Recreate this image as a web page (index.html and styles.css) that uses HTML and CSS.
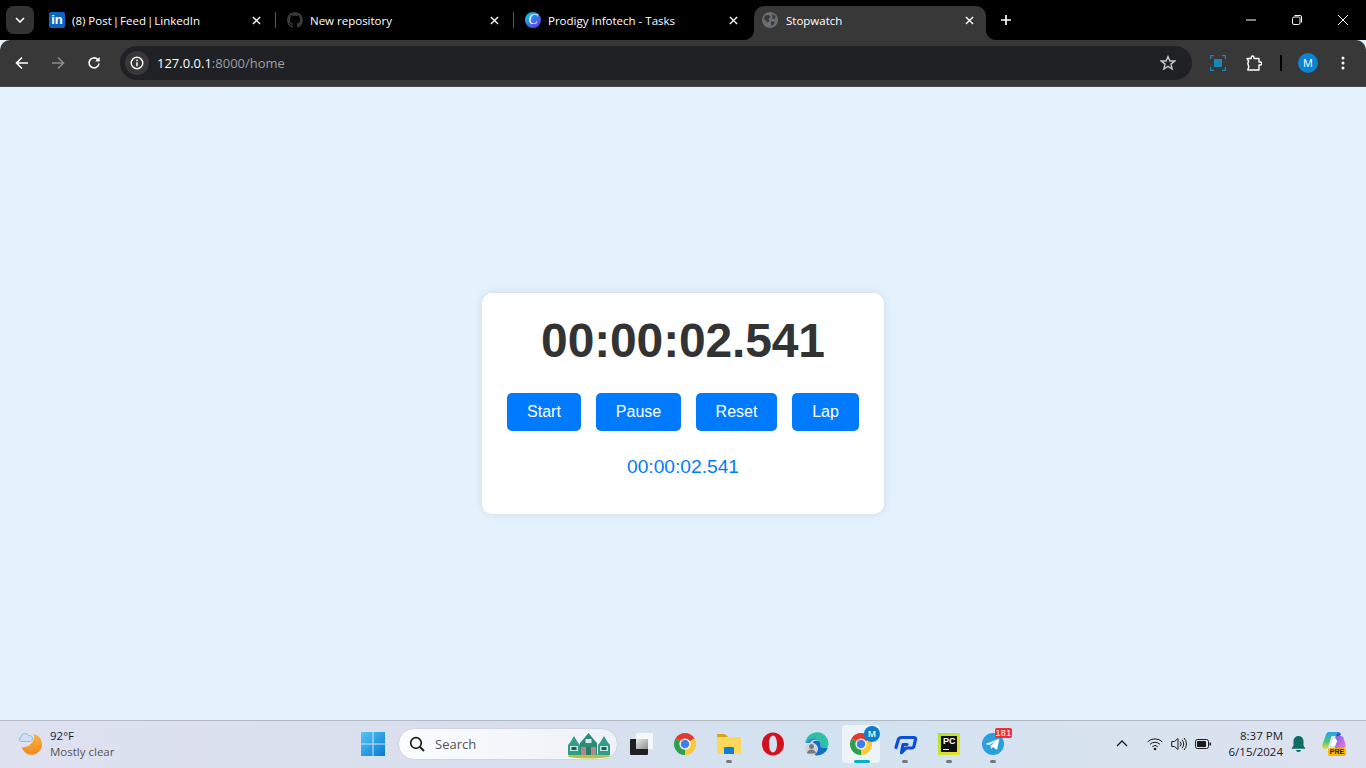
FILE: index.html
```html
<!DOCTYPE html>
<html lang="en">
<head>
    <meta charset="UTF-8">
    <meta name="viewport" content="width=device-width, initial-scale=1.0">
    <title>Stopwatch</title>
    <link rel="stylesheet" href="styles.css">
</head>
<body>
    <svg class="defs" width="0" height="0">
        <symbol id="chrome" viewBox="0 0 24 24">
            <path d="M12 12L2.47 6.5A11 11 0 0 1 21.53 6.5Z" fill="#e33b2e"/>
            <path d="M12 12L21.53 6.5A11 11 0 0 1 12 23Z" fill="#fcc934"/>
            <path d="M12 12L12 23A11 11 0 0 1 2.47 6.5Z" fill="#2f9e4f"/>
            <circle cx="12" cy="12" r="5.6" fill="#fff"/>
            <circle cx="12" cy="12" r="4.3" fill="#3f7ee8"/>
        </symbol>
        <symbol id="close" viewBox="0 0 10 10">
            <path d="M1 1L9 9M9 1L1 9" stroke="#fff" stroke-width="1.5" fill="none"/>
        </symbol>
    </svg>

    <!-- Tab strip -->
    <div class="tabstrip">
        <div class="tab-search">
            <svg width="10" height="6" viewBox="0 0 10 6"><path d="M1 1L5 5L9 1" stroke="#fff" stroke-width="1.6" fill="none"/></svg>
        </div>
        <div class="tab">
            <span class="favicon fav-in">in</span>
            <span class="tab-title">(8) Post <span class="pipe">|</span> Feed <span class="pipe">|</span> LinkedIn</span>
            <svg class="tab-close"><use href="#close"/></svg>
        </div>
        <div class="tab">
            <svg class="favicon" viewBox="0 0 16 16"><path fill="#3a3a3a" d="M8 0C3.58 0 0 3.58 0 8c0 3.54 2.29 6.53 5.47 7.59.4.07.55-.17.55-.38 0-.19-.01-.82-.01-1.49-2.01.37-2.53-.49-2.69-.94-.09-.23-.48-.94-.82-1.13-.28-.15-.68-.52-.01-.53.63-.01 1.08.58 1.23.82.72 1.21 1.87.87 2.33.66.07-.52.28-.87.51-1.07-1.78-.2-3.64-.89-3.64-3.95 0-.87.31-1.59.82-2.15-.08-.2-.36-1.02.08-2.12 0 0 .67-.21 2.2.82.64-.18 1.32-.27 2-.27s1.36.09 2 .27c1.53-1.04 2.2-.82 2.2-.82.44 1.1.16 1.92.08 2.12.51.56.82 1.27.82 2.15 0 3.07-1.87 3.75-3.65 3.95.29.25.54.73.54 1.48 0 1.07-.01 1.93-.01 2.2 0 .21.15.46.55.38A8.01 8.01 0 0 0 16 8c0-4.42-3.58-8-8-8z"/></svg>
            <span class="tab-title">New repository</span>
            <svg class="tab-close"><use href="#close"/></svg>
        </div>
        <div class="tab tab-last">
            <span class="favicon fav-canva">C</span>
            <span class="tab-title">Prodigy Infotech - Tasks</span>
            <svg class="tab-close"><use href="#close"/></svg>
        </div>
        <div class="tab-active">
            <svg class="favicon" viewBox="0 0 16 16">
                <circle cx="8" cy="8" r="8" fill="#6a6e72"/>
                <path d="M3 3.5L7 3L8.5 5L6.5 7L7.5 9L5.5 10.5L2 7ZM10 2L13.5 4L13 7L10.500 6.500ZM9 9.500L13 9.500L11 13.500L9 13Z" fill="#3a3a3a"/>
            </svg>
            <span class="tab-title">Stopwatch</span>
            <svg class="tab-close"><use href="#close"/></svg>
        </div>
        <svg class="new-tab" width="12" height="12" viewBox="0 0 12 12"><path d="M6 1V11M1 6H11" stroke="#fff" stroke-width="1.7"/></svg>
        <div class="win-controls">
            <svg width="12" height="12" viewBox="0 0 12 12"><path d="M1 6H11" stroke="#fff"/></svg>
            <svg width="12" height="12" viewBox="0 0 12 12"><rect x="1.5" y="3" width="7.5" height="7.5" rx="1.5" stroke="#fff" fill="none"/><path d="M3.5 1.5H9A1.5 1.5 0 0 1 10.5 3V8.5" stroke="#fff" fill="none"/></svg>
            <svg width="12" height="12" viewBox="0 0 12 12"><path d="M1 1L11 11M11 1L1 11" stroke="#fff"/></svg>
        </div>
    </div>

    <!-- Address bar -->
    <div class="toolbar">
        <svg class="nav-btn" width="14" height="14" viewBox="0 0 14 14"><path d="M13 7H2M7 1.5L1.5 7L7 12.5" stroke="#fff" stroke-width="1.6" fill="none"/></svg>
        <svg class="nav-btn" width="14" height="14" viewBox="0 0 14 14"><path d="M1 7H12M7 1.5L12.5 7L7 12.5" stroke="#8a8a8a" stroke-width="1.6" fill="none"/></svg>
        <svg class="nav-btn" width="14" height="14" viewBox="0 0 14 14"><path d="M12 7.5A5 5 0 1 1 10.6 3.4L12 4.8" stroke="#fff" stroke-width="1.6" fill="none"/><path d="M12.7 1V5.6H8.1Z" fill="#fff"/></svg>
        <div class="omnibox">
            <div class="site-info">
                <svg width="14" height="14" viewBox="0 0 14 14"><circle cx="7" cy="7" r="5.8" stroke="#fff" stroke-width="1.4" fill="none"/><path d="M7 6.2V10.2" stroke="#fff" stroke-width="1.5"/><circle cx="7" cy="4.3" r=".9" fill="#fff"/></svg>
            </div>
            <span class="url"><span class="url-host">127.0.0.1</span>:8000/home</span>
            <svg class="star" width="16" height="16" viewBox="0 0 16 16"><path d="M8 1.6L9.9 6H14.8L10.9 9.1L12.2 14L8 11.3L3.8 14L5.1 9.1L1.2 6H6.1Z" stroke="#c7c7c7" stroke-width="1.4" fill="none"/></svg>
        </div>
        <div class="toolbar-actions">
            <svg class="act-capture" width="16" height="16" viewBox="0 0 16 16"><rect x="4" y="4" width="8" height="8" fill="#1a86b8"/><path d="M.7 4V.7H4M12 .7H15.3V4M15.3 12V15.3H12M4 15.3H.7V12" stroke="#1a86b8" stroke-width="1.2" fill="none"/></svg>
            <svg class="act-ext" width="16" height="16" viewBox="0 0 16 16"><path d="M1 3.5H5.2V2.4A1.4 1.4 0 0 1 8 2.4V3.5H13V7H14.2A1.5 1.5 0 0 1 14.2 10H13V15H1.8L2.8 11.8L1.8 8.5L2.6 6Z" stroke="#fff" stroke-width="1.4" stroke-linejoin="round" fill="none"/></svg>
            <span class="act-sep"></span>
            <span class="avatar">M</span>
            <svg class="act-menu" width="4" height="14" viewBox="0 0 4 14"><circle cx="2" cy="2" r="1.5" fill="#fff"/><circle cx="2" cy="7" r="1.5" fill="#fff"/><circle cx="2" cy="12" r="1.5" fill="#fff"/></svg>
        </div>
    </div>

    <!-- Stopwatch page -->
    <main class="page">
        <div class="stopwatch">
            <div class="display">00:00:02.541</div>
            <div class="controls">
                <button class="btn">Start</button>
                <button class="btn">Pause</button>
                <button class="btn">Reset</button>
                <button class="btn">Lap</button>
            </div>
            <ul class="laps">
                <li>00:00:02.541</li>
            </ul>
        </div>
    </main>

    <!-- Windows taskbar -->
    <footer class="taskbar">
        <div class="weather">
            <svg width="26" height="26" viewBox="0 0 26 26">
                <defs>
                    <linearGradient id="moon" x1="0" y1="0" x2="0" y2="1"><stop offset="0" stop-color="#fbb43f"/><stop offset="1" stop-color="#f08a1d"/></linearGradient>
                </defs>
                <path d="M16 3A10.500 10.500 0 1 1 3.500 16A11 11 0 0 0 16 3Z" fill="url(#moon)"/>
                <path d="M3.200 10.500A2.400 2.400 0 0 1 3.200 5.800A3.800 3.800 0 0 1 10.500 4.800A2.900 2.900 0 0 1 12.500 10.500Z" fill="#cfe0f5" stroke="#8fb4e4" stroke-width=".9"/>
            </svg>
            <div class="weather-text">
                <span class="weather-temp">92°F</span>
                <span class="weather-desc">Mostly clear</span>
            </div>
        </div>

        <div class="task-icons">
            <div class="slot">
                <svg class="start" width="24" height="24" viewBox="0 0 24 24">
                    <defs>
                        <linearGradient id="win" x1="0" y1="0" x2="1" y2="1"><stop offset="0" stop-color="#4fc9f7"/><stop offset="1" stop-color="#0a78d4"/></linearGradient>
                    </defs>
                    <path d="M0 0H11.5V11.5H0ZM12.5 0H24V11.5H12.5ZM0 12.5H11.5V24H0ZM12.5 12.5H24V24H12.5Z" fill="url(#win)"/>
                </svg>
            </div>
            <div class="search">
                <svg width="16" height="16" viewBox="0 0 16 16"><circle cx="7" cy="7" r="5.3" stroke="#1b1b1b" stroke-width="1.7" fill="none"/><path d="M11 11L15 15" stroke="#1b1b1b" stroke-width="1.9"/></svg>
                <span class="search-label">Search</span>
                <svg class="search-art" width="44" height="26" viewBox="0 0 44 26">
                    <ellipse cx="22" cy="23" rx="21" ry="2.500" fill="#b9c13f"/>
                    <path d="M1 22V12L3.500 9L7 3L10.500 9L13 12V22Z" fill="#2f9d88"/>
                    <path d="M31 22V12L33.500 9L37 3L40.500 9L43 12V22Z" fill="#2f9d88"/>
                    <path d="M13 22V10L16.500 6L21.500 0L26.500 6L30 10V22Z" fill="#2d8b78"/>
                    <path d="M14 14H29V22H14Z" fill="#b08a86"/>
                    <path d="M19 14H24V22H19Z" fill="#2c7a6c"/>
                    <path d="M18.500 6H24.500V10H18.500Z" fill="#d7ece6"/>
                    <path d="M3 13H11V18H3ZM33 13H41V18H33Z" fill="#c8e6de"/>
                    <path d="M4.500 14H9.500V17H4.500ZM34.500 14H39.500V17H34.500Z" fill="#1c5f58"/>
                </svg>
            </div>
            <div class="slot">
                <svg width="24" height="24" viewBox="0 0 24 24">
                    <defs>
                        <linearGradient id="taskview" x1="0" y1="0" x2="1" y2="1"><stop offset="0" stop-color="#e8e8e8"/><stop offset="1" stop-color="#8f8f8f"/></linearGradient>
                    </defs>
                    <rect x="7" y="1" width="18" height="16" rx="1.500" fill="#f6f7f9"/>
                    <rect x="1" y="7" width="18" height="16" rx="1" fill="#1f1f1f"/>
                    <rect x="7" y="7" width="12" height="10" fill="url(#taskview)"/>
                </svg>
            </div>
            <div class="slot"><svg class="app" width="24" height="24"><use href="#chrome"/></svg></div>
            <div class="slot running">
                <svg class="app" width="24" height="24" viewBox="0 0 24 24">
                    <path d="M0 3A1 1 0 0 1 1 2H8L11 5H0Z" fill="#d9a416"/>
                    <path d="M0 5H24V21A1 1 0 0 1 23 22H1A1 1 0 0 1 0 21Z" fill="#fbd75b"/>
                    <path d="M7 17A1.500 1.500 0 0 1 8.500 15H15.500A1.500 1.500 0 0 1 17 17V22H7Z" fill="#0f7fd6"/>
                </svg>
            </div>
            <div class="slot">
                <svg class="app" width="24" height="24" viewBox="0 0 24 24"><path fill-rule="evenodd" d="M12 .5C5.500.5 1 5.700 1 12s4.500 11.500 11 11.500S23 18.300 23 12 18.500.5 12 .5ZM12 3.500c2.500 0 4 3.800 4 8.500s-1.500 8.500-4 8.500S8 16.700 8 12s1.500-8.500 4-8.500Z" fill="#d2101e"/></svg>
            </div>
            <div class="slot">
                <svg class="app" width="24" height="24" viewBox="0 0 24 24">
                    <path d="M.5 11A11.500 11.500 0 0 1 23.500 12.500C23.500 15.500 20 16.500 17 15.500C14.500 14.500 16 12 15 10C13.500 7.500 5 6 .5 11Z" fill="#2fbfa8"/>
                    <path d="M.5 11C5 6 9 5.500 12 7C8 7.500 6 9 5.500 11Z" fill="#1f8fd8"/>
                    <path d="M15 10C16 12 14.500 14.500 17 15.500C20 16.500 23 15.500 23 15.500A11.500 11.500 0 0 1 11 23.500C8 22 8 19 10 17C6 14 7 11 9 9C11 8.500 14 8.500 15 10Z" fill="#0f6fc4"/>
                    <circle cx="6.500" cy="17" r="6.500" fill="#d0d5da"/>
                    <circle cx="6.500" cy="14.500" r="2.500" fill="#77797c"/>
                    <path d="M2 21.500A4.500 4 0 0 1 11 21.500Z" fill="#77797c"/>
                </svg>
            </div>
            <div class="slot slot-active">
                <svg class="app" width="24" height="24"><use href="#chrome"/></svg>
                <span class="profile-badge">M</span>
            </div>
            <div class="slot running">
                <svg class="app" width="26" height="22" viewBox="0 0 26 22"><path d="M4 14.500L6.500 6Q7 4.500 9 4.500H21.500Q24 4.500 23.500 6.500L22 13Q21.500 15 19.500 15H14L9.500 19.500L11 11.500H15" stroke="#0b4fd6" stroke-width="3.200" stroke-linejoin="round" stroke-linecap="round" fill="none"/></svg>
            </div>
            <div class="slot running">
                <div class="pycharm"><span>PC</span><i></i></div>
            </div>
            <div class="slot running">
                <svg class="app" width="24" height="24" viewBox="0 0 24 24">
                    <circle cx="12" cy="12" r="11" fill="#2b9fdc"/>
                    <path d="M4.500 12L18.500 6.500L16 18L12 15L10 17L9.500 13.500L15.500 9L8 13Z" fill="#fff"/>
                </svg>
                <span class="tg-badge">181</span>
            </div>
        </div>

        <div class="tray">
            <svg class="tray-up" width="12" height="7" viewBox="0 0 12 7"><path d="M1 6L6 1L11 6" stroke="#1b1b1b" stroke-width="1.3" fill="none"/></svg>
            <svg class="tray-wifi" width="16" height="14" viewBox="0 0 16 14"><path d="M.7 4.800A10.500 10.500 0 0 1 15.300 4.800M3 7.300A7.200 7.200 0 0 1 13 7.300M5.300 9.700A3.800 3.800 0 0 1 10.700 9.700" stroke="#1b1b1b" fill="none"/><circle cx="8" cy="12" r="1.300" fill="#1b1b1b"/></svg>
            <svg class="tray-vol" width="16" height="14" viewBox="0 0 16 14"><path d="M.7 4.500H3.500L7 1.500V12.500L3.500 9.500H.7Z" stroke="#1b1b1b" fill="none"/><path d="M9 4.500A3.500 3.500 0 0 1 9 9.500M11 2.800A6 6 0 0 1 11 11.200M13 1A8.500 8.500 0 0 1 13 13" stroke="#1b1b1b" fill="none"/></svg>
            <svg class="tray-bat" width="16" height="10" viewBox="0 0 16 10"><rect x=".5" y=".5" width="13" height="9" rx="2" stroke="#1b1b1b" fill="none"/><rect x="2" y="2" width="9" height="6" rx=".6" fill="#1b1b1b"/><rect x="14.500" y="3.500" width="1.500" height="3" fill="#1b1b1b"/></svg>
            <div class="clock">
                <span>8:37 PM</span>
                <span>6/15/2024</span>
            </div>
            <svg class="tray-bell" width="15" height="16" viewBox="0 0 15 16"><path d="M7.500 0A5 5 0 0 1 12.500 5V9.500L14.500 12.800H.5L2.500 9.500V5A5 5 0 0 1 7.500 0Z" fill="#0f6b66"/><path d="M5 14H10A2.500 2 0 0 1 5 14Z" fill="#0f6b66"/></svg>
            <div class="copilot">
                <svg width="24" height="17" viewBox="0 0 24 17">
                    <defs>
                        <linearGradient id="cp1" x1="0" y1="0" x2="0" y2="1"><stop offset="0" stop-color="#2f9fe8"/><stop offset=".55" stop-color="#45c77a"/><stop offset="1" stop-color="#f2d53c"/></linearGradient>
                        <linearGradient id="cp2" x1="0" y1="0" x2="1" y2="1"><stop offset="0" stop-color="#7a6ce8"/><stop offset=".5" stop-color="#b56ce0"/><stop offset="1" stop-color="#f08ab4"/></linearGradient>
                    </defs>
                    <path d="M7 0H15.500L13.500 4H9.500L6.500 14C6 16 4.500 17 3 17C1 17 -.5 15 .3 13L4 2.500C4.500 1 5.500 0 7 0Z" fill="url(#cp1)"/>
                    <path d="M15.500 0C17.500 0 18.500 1 19 2.500L17.500 4H13.500Z" fill="#1f62d8"/>
                    <path d="M14 4H19C20.500 4 21 5 21.500 6L23.700 12.500C24.300 14.500 23 16 21 16H12.500L15 9L13 5.500Z" fill="url(#cp2)"/>
                    <path d="M13.500 6.500L15 9L12.800 14H8.500L11 6.500Z" fill="#fff"/>
                </svg>
                <span class="pre-badge">PRE</span>
            </div>
        </div>
    </footer>
</body>
</html>
```

FILE: styles.css
```css
* {
    box-sizing: border-box;
}

html, body {
    height: 100%;
}

body {
    margin: 0;
    display: flex;
    flex-direction: column;
    overflow: hidden;
    font-family: "Open Sans", "Noto Sans", sans-serif;
    background-color: #e3f2fd; /* Light blue */
}

.defs {
    display: none;
}

/* Tab strip */
.tabstrip {
    height: 40px;
    flex: none;
    display: flex;
    align-items: flex-start;
    background-color: #000;
    color: #fff;
    padding-left: 6px;
}

.tab-search {
    width: 28px;
    height: 28px;
    margin-top: 6px;
    margin-right: 4px;
    border-radius: 8px;
    background-color: #333;
    display: flex;
    align-items: center;
    justify-content: center;
}

.tab {
    width: 238px;
    height: 34px;
    margin-top: 6px;
    padding-left: 11px;
    display: flex;
    align-items: center;
    position: relative;
}

.tab::after {
    content: "";
    position: absolute;
    right: 0;
    top: 6px;
    width: 1px;
    height: 16px;
    background-color: #5a5a5a;
}

.tab-last {
    width: 240px;
}

.tab-last::after {
    display: none;
}

.favicon {
    width: 16px;
    height: 16px;
    flex: none;
    margin-right: 7px;
    margin-top: -6px;
}

.fav-in {
    background-color: #0a66c2;
    border-radius: 2px;
    font: bold 13px/16px "Liberation Sans", sans-serif;
    text-align: center;
    color: #fff;
}

.fav-canva {
    border-radius: 50%;
    background: linear-gradient(135deg, #19c8d8 10%, #3a6ee8 55%, #7d2ae8);
    font: italic 14px/16px "Liberation Serif", serif;
    text-align: center;
    color: #fff;
}

.tab-title {
    flex: 1;
    font-size: 11.5px;
    margin-top: -6px;
    white-space: nowrap;
}

.pipe {
    margin: 0 -2px;
}

.tab-close {
    width: 9px;
    height: 9px;
    flex: none;
    margin-right: 15px;
    margin-top: -6px;
}

.tab-last .tab-close {
    margin-right: 16px;
}

.tab-active {
    width: 232px;
    height: 34px;
    margin-top: 6px;
    padding-left: 8px;
    display: flex;
    align-items: center;
    background-color: #383838;
    border-radius: 10px 10px 0 0;
    position: relative;
}

/* Curved feet of the active tab */
.tab-active::before, .tab-active::after {
    content: "";
    position: absolute;
    bottom: 0;
    width: 10px;
    height: 10px;
}

.tab-active::before {
    left: -10px;
    background: radial-gradient(circle at 0 0, #000 9.5px, #383838 10.5px);
}

.tab-active::after {
    right: -10px;
    background: radial-gradient(circle at 100% 0, #000 9.5px, #383838 10.5px);
}

.tab-active .favicon {
    margin-right: 8px;
}

.tab-active .tab-close {
    margin-right: 12px;
}

.new-tab {
    margin-left: 14px;
    margin-top: 14px;
    flex: none;
}

.win-controls {
    margin-left: auto;
    display: flex;
    gap: 34px;
    padding-right: 17px;
    padding-top: 14px;
}

/* Toolbar */
.toolbar {
    height: 47px;
    flex: none;
    display: flex;
    align-items: center;
    background-color: #383838;
    border-bottom: 1px solid #4a4a4a;
    border-radius: 10px 10px 0 0;
    padding: 0 0 1px 15px;
}

.nav-btn {
    flex: none;
    margin-right: 22px;
}

.omnibox {
    width: 1072px;
    height: 34px;
    margin-left: -3px;
    background-color: #202124;
    border-radius: 17px;
    display: flex;
    align-items: center;
    padding-left: 5px;
    padding-right: 16px;
}

.site-info {
    width: 24px;
    height: 24px;
    border-radius: 50%;
    background-color: #383838;
    display: flex;
    align-items: center;
    justify-content: center;
    margin-right: 8px;
}

.url {
    flex: 1;
    color: #9aa0a6;
    font-size: 13px;
}

.url-host {
    color: #fff;
}

.toolbar-actions {
    display: flex;
    align-items: center;
    margin-left: 18px;
}

.act-capture {
    margin-right: 20px;
}

.act-ext {
    margin-right: 18px;
}

.act-sep {
    width: 2px;
    height: 16px;
    background-color: #000;
    margin-right: 16px;
}

.avatar {
    width: 20px;
    height: 20px;
    border-radius: 50%;
    background-color: #0b84d2;
    color: #fff;
    font-size: 11px;
    line-height: 20px;
    text-align: center;
    margin-right: 23px;
}

/* Stopwatch */
.page {
    flex: 1;
    display: flex;
    align-items: center;
    justify-content: center;
    font-family: "Liberation Sans", Arial, sans-serif;
}

.stopwatch {
    width: 402px;
    height: 221px;
    background-color: #fff;
    border-radius: 10px;
    box-shadow: 0 0 10px rgba(0, 0, 0, 0.1);
    padding: 20px 25px;
    text-align: center;
}

.display {
    font-size: 48px;
    font-weight: bold;
    letter-spacing: -0.15px;
    color: #333;
    line-height: 55px;
    margin-bottom: 25px;
}

.controls {
    display: grid;
    grid-template-columns: 74px 85px 81px 67px;
    justify-content: center;
    gap: 15px;
}

.btn {
    font-family: inherit;
    font-size: 16px;
    line-height: 18px;
    padding: 10px 0;
    color: #fff;
    background-color: #007bff;
    border: none;
    border-radius: 5px;
    cursor: pointer;
}

.laps {
    list-style: none;
    margin: 25px 0 0;
    padding: 0;
    font-size: 19.2px;
    line-height: 22px;
    color: #007bff;
}

/* Taskbar */
.taskbar {
    height: 48px;
    flex: none;
    display: grid;
    grid-template-columns: 1fr auto 1fr;
    align-items: center;
    padding-bottom: 2px;
    background: linear-gradient(90deg, #dee2f0, #d9dfee 35%, #d3e2f0 60%, #dde2ef);
    border-top: 1px solid #b4bac4;
    color: #1b1b1b;
}

.weather {
    display: flex;
    align-items: center;
    gap: 6px;
    padding-left: 18px;
}

.weather-text {
    display: flex;
    flex-direction: column;
    font-size: 11.5px;
    line-height: 16px;
}

.weather-desc {
    color: #555;
}

.task-icons {
    display: flex;
    align-items: center;
}

.slot {
    width: 44px;
    height: 40px;
    display: flex;
    align-items: center;
    justify-content: center;
    position: relative;
}

.running::after {
    content: "";
    position: absolute;
    left: 19px;
    bottom: 1px;
    width: 6px;
    height: 3px;
    border-radius: 2px;
    background-color: #777;
}

.slot-active::before {
    content: "";
    position: absolute;
    left: 3px;
    top: 1px;
    width: 38px;
    height: 38px;
    border-radius: 4px;
    background-color: #eef3f8;
}

.slot-active::after {
    content: "";
    position: absolute;
    left: 15px;
    bottom: 1px;
    width: 16px;
    height: 3px;
    border-radius: 2px;
    background-color: #00b4c4;
}

.app {
    position: relative;
}

.search {
    width: 220px;
    height: 32px;
    margin: 0 1px 0 3px;
    border-radius: 16px;
    background: linear-gradient(90deg, #fbfcfe, #eef1f8);
    border: 1px solid #cfd5e0;
    display: flex;
    align-items: center;
    padding-left: 10px;
    padding-right: 6px;
}

.search-label {
    flex: 1;
    margin-left: 10px;
    font-size: 13px;
    color: #555;
}

.search-art {
    margin-top: 4px;
}

.profile-badge {
    position: absolute;
    top: 2px;
    right: 3px;
    width: 16px;
    height: 16px;
    border-radius: 50%;
    background-color: #0b7fcb;
    color: #fff;
    font-size: 9px;
    font-weight: 600;
    line-height: 16px;
    text-align: center;
}

.pycharm {
    width: 22px;
    height: 22px;
    background: linear-gradient(135deg, #a8e234, #f0e02c);
    padding: 3px;
    position: relative;
}

.pycharm span {
    display: block;
    height: 16px;
    background-color: #111;
    color: #fff;
    font: bold 9px/11px "Liberation Sans", sans-serif;
    padding-left: 2px;
}

.pycharm i {
    position: absolute;
    left: 5px;
    bottom: 5px;
    width: 6px;
    height: 1px;
    background-color: #fff;
}

.tg-badge {
    position: absolute;
    top: 4px;
    right: 3px;
    width: 17px;
    height: 10px;
    border-radius: 2px;
    background-color: #ee2e36;
    color: #fff;
    font: 9px/10px "Liberation Sans", sans-serif;
    letter-spacing: 0.4px;
    text-align: center;
}

.tray {
    display: flex;
    align-items: center;
    justify-content: flex-end;
    position: relative;
}

.tray-up {
    margin-right: 19px;
}

.tray-wifi, .tray-vol {
    margin-right: 8px;
}

.tray-bat {
    margin-right: 18px;
}

.clock {
    display: flex;
    flex-direction: column;
    align-items: flex-end;
    font-size: 11.5px;
    line-height: 16px;
    margin-right: 8px;
}

.tray-bell {
    margin-right: 16px;
}

.copilot {
    width: 24px;
    height: 24px;
    margin-right: 20px;
    position: relative;
}

.pre-badge {
    position: absolute;
    right: 0;
    bottom: 0;
    width: 18px;
    height: 8px;
    border-radius: 2px;
    background-color: #f9b800;
    color: #222;
    font: bold 7px/8px "Liberation Sans", sans-serif;
    text-align: center;
}
```
